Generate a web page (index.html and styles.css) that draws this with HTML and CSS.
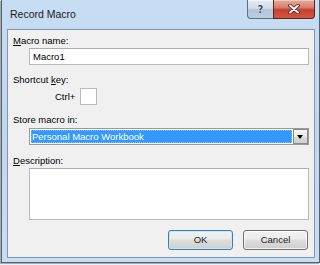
FILE: index.html
```html
<!DOCTYPE html>
<html lang="en">
<head>
  <meta charset="UTF-8" />
  <title>Record Macro</title>
  <link rel="stylesheet" href="styles.css">
</head>
<body>

  <!-- Ventana del cuadro de diálogo -->
  <div class="window">
    <div class="titlebar">
      <span class="title">Record Macro</span>
      <div class="caption-buttons">
        <div class="cap-btn help"><span>?</span></div>
        <div class="cap-btn close">
          <svg width="14" height="10" viewBox="0 0 14 10">
            <path d="M3 1.5 L11 8.5 M11 1.5 L3 8.5" stroke="#4b1d17" stroke-width="3.6" stroke-linecap="round" fill="none"/>
            <path d="M3 1.5 L11 8.5 M11 1.5 L3 8.5" stroke="#fff" stroke-width="2" stroke-linecap="round" fill="none"/>
          </svg>
        </div>
      </div>
    </div>

    <div class="client">
      <div class="field-label first"><u>M</u>acro name:</div>
      <div class="textbox">Macro1</div>

      <div class="field-label">Shortcut <u>k</u>ey:</div>
      <div class="shortcut-row">
        <span>Ctrl+</span>
        <div class="keybox"></div>
      </div>

      <div class="field-label">Store macro in:</div>
      <div class="combo">
        <div class="combo-value">Personal Macro Workbook</div>
        <div class="combo-arrow"></div>
      </div>

      <div class="field-label desc"><u>D</u>escription:</div>
      <div class="textarea"></div>

      <div class="button-row">
        <div class="btn default">OK</div>
        <div class="btn">Cancel</div>
      </div>
    </div>
  </div>

</body>
</html>
```

FILE: styles.css
```css
/* === Reset y fondo === */
* { margin:0; padding:0; box-sizing:border-box; }
html, body {
  width:100%; height:100%;
  background: #fff;
  font-family: "Liberation Sans", Arial, sans-serif;
  font-size: 9.5px;
  color: #000;
  overflow: hidden;
}

/* === Marco de la ventana (estilo Aero) === */
.window {
  margin-left: 1px;
  width: 319px; height: 263px;
  border: 1px solid #56616e;
  border-top: none;
  background: linear-gradient(180deg, #c6ddf4 0%, #bfd6ef 50%, #c8def5 100%);
  padding: 0 4px 4px 5px;
  display: flex; flex-direction: column;
  box-shadow: -1px 1px 1px rgba(60,70,80,0.45);
}

/* === Barra de título === */
.titlebar {
  height: 29px;
  display: flex; align-items: flex-start; justify-content: space-between;
}
.titlebar .title {
  font-size: 10.5px;
  color: #1b1b1b;
  padding-left: 3px;
  line-height: 29px;
}
.caption-buttons {
  display: flex;
}
.cap-btn {
  height: 19px;
  border: 1px solid #5f6f82;
  border-top: none;
  display: flex; align-items: center; justify-content: center;
}
.cap-btn.help {
  width: 26px;
  border-right: none;
  border-bottom-left-radius: 4px;
  background: linear-gradient(180deg, #e3eaf3 0%, #d2dde9 45%, #b3c4d6 55%, #bccfe0 100%);
  box-shadow: inset 0 1px 0 rgba(255,255,255,0.6);
}
.cap-btn.help span {
  font-family: "DejaVu Sans", sans-serif;
  font-weight: bold;
  font-size: 10px;
  color: #3c4858;
  text-shadow: 0 0 1px #fff, 0 0 1px #fff;
}
.cap-btn.close {
  width: 42px;
  border-color: #5a2620;
  border-bottom-right-radius: 4px;
  background: linear-gradient(180deg, #e9a998 0%, #d98271 40%, #c4412e 55%, #d2573f 100%);
  box-shadow: inset 0 1px 0 rgba(255,255,255,0.4);
}

/* === Área cliente === */
.client {
  width: 308px; height: 229px;
  border: 1px solid #8197ad;
  background: #f0f0f0;
  padding: 0 0 7px 0;
  display: flex; flex-direction: column;
}
.field-label {
  line-height: 13px;
  padding-left: 5px;
  margin-top: 8px;
}
.field-label.first { margin-top: 4px; }
.field-label.desc { margin-top: 9px; }
.field-label u { text-decoration: underline; text-underline-offset: 1px; }

.textbox {
  margin: 1px 5px 0 21px;
  height: 17px;
  background: #fff;
  border: 1px solid #b6bac0;
  border-top-color: #abadb3;
  line-height: 15px;
  padding-left: 3px;
}

.shortcut-row {
  margin-top: 2px;
  padding-left: 47px;
  height: 17px;
  display: flex; align-items: center; gap: 5px;
}
.keybox {
  width: 17px; height: 17px;
  background: #fff;
  border: 1px solid #b6bac0;
}

/* === Combo === */
.combo {
  margin: 2px 5px 0 21px;
  height: 17px;
  border: 1px solid #9a9a9a;
  background: #fff;
  padding: 1px;
  display: flex;
}
.combo-value {
  flex: 1;
  background: #3399ff;
  color: #fff;
  line-height: 13px;
  padding-left: 1px;
  outline: 1px dotted #7fbfff;
  outline-offset: -1px;
}
.combo-arrow {
  width: 15px;
  margin: -1px -1px -1px 1px;
  border: 1px solid #8a8a8a;
  background: linear-gradient(180deg, #f4f4f4 0%, #e9e9e9 50%, #d9d9d9 51%, #d0d0d0 100%);
  position: relative;
}
.combo-arrow::after {
  content: "";
  position: absolute;
  left: 3px; top: 5px;
  border-left: 3.5px solid transparent;
  border-right: 3.5px solid transparent;
  border-top: 4px solid #000;
}

.textarea {
  margin: 1px 5px 0 21px;
  height: 52px;
  background: #fff;
  border: 1px solid #b6bac0;
  border-top-color: #abadb3;
}

/* === Botones === */
.button-row {
  margin-top: 10px;
  padding-right: 6px;
  display: flex; justify-content: flex-end; gap: 10px;
}
.btn {
  width: 65px; height: 20px;
  border: 1px solid #707070;
  border-radius: 3px;
  background: linear-gradient(180deg, #f2f2f2 0%, #ebebeb 45%, #dddddd 50%, #cfcfcf 100%);
  box-shadow: inset 0 0 0 1px rgba(255,255,255,0.7);
  text-align: center;
  line-height: 18px;
  color: #222;
}
.btn.default {
  border-color: #3c7fb1;
  box-shadow: inset 0 0 0 1px #c8e4f7;
}
```
